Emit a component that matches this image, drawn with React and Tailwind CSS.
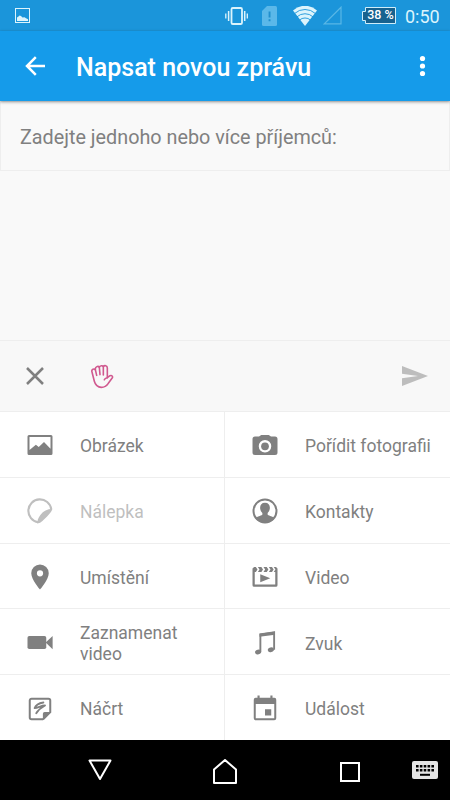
const font = { fontFamily: 'Roboto, "Noto Sans", sans-serif' };

function Icon({ children }) {
  return (
    <svg className="h-[30px] w-[30px] shrink-0" viewBox="0 0 24 24" fill="currentColor">
      {children}
    </svg>
  );
}

const items = [
  {
    label: "Obrázek",
    icon: <path fillRule="evenodd" d="M3.2 4h17.6a1.2 1.2 0 0 1 1.2 1.2v13.6a1.2 1.2 0 0 1-1.2 1.2H3.2A1.2 1.2 0 0 1 2 18.8V5.2A1.2 1.2 0 0 1 3.2 4zM3.6 5.6v10.400L8.700 11.800l2.300 1.800 4.200-4 5.200 5.400V5.600z" />,
  },
  {
    label: "Pořídit fotografii",
    icon: (
      <>
        <path fillRule="evenodd" d="M9 4h6l1.8 1.200H20a2 2 0 0 1 2 2V18a2 2 0 0 1-2 2H4a2 2 0 0 1-2-2V7.200a2 2 0 0 1 2-2h3.200L9 4zm3 4a5 5 0 1 0 0 10 5 5 0 0 0 0-10z" />
        <circle cx="12" cy="13" r="3.100" />
      </>
    ),
  },
  {
    label: "Nálepka",
    disabled: true,
    icon: (
      <>
        <path d="M21 10.600A9.200 9.200 0 1 0 10.500 21" fill="none" stroke="currentColor" strokeWidth="1.700" />
        <path d="M21.900 10.300c-.4 1.300-1.200 2.600-2.500 4.100-2.200 2.600-4.900 5.200-7.300 7l-2.200.5c-.2-2.100.6-4.500 2.400-6.800 2.400-3.100 5.500-4.600 9.600-4.800z" />
      </>
    ),
  },
  {
    label: "Kontakty",
    icon: (
      <>
        <circle cx="12" cy="12" r="9.200" fill="none" stroke="currentColor" strokeWidth="1.600" />
        <path d="M12 5.300c2.600 0 3.900 1.600 3.900 4 0 1.800-.8 3.400-1.800 4.300v1.200c.4 1 3.400 1.200 5.100 2.500l-.5 1.900A9.200 9.200 0 0 1 12 21.400a9.200 9.200 0 0 1-6.700-2.200l-.5-1.900c1.700-1.300 4.700-1.500 5.100-2.500v-1.200c-1-.9-1.800-2.500-1.800-4.300 0-2.400 1.300-4 3.900-4z" />
      </>
    ),
  },
  {
    label: "Umístění",
    icon: <path fillRule="evenodd" d="M12 2a7 7 0 0 0-7 7c0 5.200 7 13 7 13s7-7.800 7-13a7 7 0 0 0-7-7zm0 4.500a2.500 2.500 0 1 1 0 5 2.500 2.500 0 0 1 0-5z" />,
  },
  {
    label: "Video",
    icon: (
      <>
        <path d="M2 5.200 3.300 4h1.400l1.300 2-1.300 2h-.9v10h16.400V8h-1.200L20.300 6 19 4h1.800L22 5.200v13.300a1.300 1.300 0 0 1-1.300 1.300H3.300A1.300 1.300 0 0 1 2 18.500z" />
        <path d="M6.300 4h2.800l1.300 2-1.300 2H6.300l1.300-2zM10.800 4h2.600l1.300 2-1.300 2h-2.600l1.300-2zM15.100 4h2.500l1.300 2-1.300 2h-2.500l1.300-2zM8.200 9.800l8 3.200-8 3.200z" />
      </>
    ),
  },
  {
    label: "Zaznamenat video",
    icon: (
      <>
        <rect x="2" y="6.400" width="15" height="10.400" rx="1.400" />
        <path d="m16.500 11.600 5.600-5.300v10.600z" />
      </>
    ),
  },
  {
    label: "Zvuk",
    icon: (
      <>
        <ellipse cx="6.500" cy="19.200" rx="2.500" ry="1.800" transform="rotate(-15 6.500 19.200)" />
        <ellipse cx="16.700" cy="17.400" rx="2.500" ry="1.800" transform="rotate(-15 16.700 17.400)" />
        <path d="M8.300 19V5.100l11-1.700v13.900" fill="none" stroke="currentColor" strokeWidth="1.500" />
        <path d="m7.600 4.500 12.400-1.800v2.600L7.600 7z" />
      </>
    ),
  },
  {
    label: "Náčrt",
    icon: (
      <>
        <path d="M14.500 20.200H5.200a1.400 1.400 0 0 1-1.400-1.400V5.200a1.400 1.400 0 0 1 1.400-1.400h13.600a1.400 1.400 0 0 1 1.400 1.400v9.300l-5.700 5.700" fill="none" stroke="currentColor" strokeWidth="1.600" />
        <path d="M14.300 21v-5.300a1.400 1.400 0 0 1 1.400-1.400H21z" />
        <path d="M14.700 6.800C11.500 7.300 8.500 9 7.700 11.200c2.800 0 5-2 8.300-2-2.800 1.500-5.500 3.800-7 6.200" fill="none" stroke="currentColor" strokeWidth="1.500" strokeLinejoin="round" strokeLinecap="round" />
      </>
    ),
  },
  {
    label: "Událost",
    icon: (
      <>
        <path fillRule="evenodd" d="M6 1.200h1.700V3h8.600V1.200H18V3h1.500A1.600 1.600 0 0 1 21 4.600v14.800a1.600 1.600 0 0 1-1.600 1.600H4.600A1.600 1.600 0 0 1 3 19.400V4.600A1.600 1.600 0 0 1 4.600 3H6zM4.600 8v11.400h14.800V8z" />
        <path d="M12 12.200h5v5h-5z" />
      </>
    ),
  },
];

function StatusBar() {
  return (
    <div className="flex h-[31px] items-center bg-[#1b95da] pr-[10px] pl-[15px] text-[#dcf4fc]">
      <svg className="h-[15px] w-[15px]" viewBox="0 0 15 15">
        <rect x="0.500" y="0.500" width="14" height="14" fill="none" stroke="currentColor" />
        <path d="M2 13V9.500l1.500-1 1-1 1.500.6 1.500 1.500 2-.3 1.500 1 2 1V13z" fill="currentColor" />
      </svg>
      <svg className="ml-auto h-[18px] w-[23px]" viewBox="0 0 23 18" fill="none" stroke="currentColor">
        <rect x="6.500" y="1" width="10.500" height="16" rx="1.300" strokeWidth="1.800" />
        <path d="M3.600 4v10M19.700 4v10" strokeWidth="1.500" />
        <path d="M.8 6.500v5M22.300 6.500v5" strokeWidth="1.300" />
      </svg>
      <svg className="ml-[14px] h-[20px] w-[15px]" viewBox="0 0 15 20">
        <path d="M5 0h8.500A1.500 1.500 0 0 1 15 1.500v17a1.500 1.500 0 0 1-1.500 1.500h-12A1.500 1.500 0 0 1 0 18.500V5z" fill="#5bb8e9" />
        <path d="M6.600 5.500h1.900v6H6.600zM6.600 13.200h1.900v2.100H6.600z" fill="#218fce" />
      </svg>
      <svg className="ml-[16px] h-[20px] w-[24px]" viewBox="0 0 24 20">
        <path d="M0 4.500a17.600 17.600 0 0 1 24 0L12 20z" fill="currentColor" />
        <path d="M1.600 7.500a15.500 15.500 0 0 1 20.800 0M4 10.800a12 12 0 0 1 16 0M6.500 14a8.500 8.500 0 0 1 11 0" fill="none" stroke="#1b95da" strokeWidth="0.900" />
      </svg>
      <svg className="ml-[6px] h-[19px] w-[19px]" viewBox="0 0 19 19">
        <path d="M18 1.200V17.800H1.300z" fill="none" stroke="#59b7e6" strokeWidth="1.200" />
      </svg>
      <div className="relative ml-[20px] flex h-[17px] w-[34px] items-center justify-center">
        <svg className="absolute inset-0" width="34" height="17" viewBox="0 0 34 17">
          <path d="M3.500.5h30v16h-30v-3h-3v-9h3z" fill="#17628f" stroke="#cfeefa" />
        </svg>
        <span className="relative pl-[3px] text-[12.500px] leading-none font-medium whitespace-nowrap text-white">38 %</span>
      </div>
      <span className="ml-[9px] w-[35px] pt-[2px] text-[18px] leading-none whitespace-nowrap">0:50</span>
    </div>
  );
}

export default function App() {
  return (
    <div className="flex h-[800px] w-[450px] flex-col overflow-hidden bg-[#f9f9f9] text-[#808080]" style={font}>
      <StatusBar />
      <header className="z-10 flex h-[70px] items-center bg-[#159bea] pr-[18px] pl-[25px] text-white shadow-[0_1px_3px_rgba(0,0,0,0.4)]">
        <svg className="h-[20px] w-[20px]" viewBox="0 0 20 20" fill="none" stroke="currentColor" strokeWidth="2.500">
          <path d="M20 10H2M10.800 1.200 2 10l8.800 8.800" />
        </svg>
        <h1 className="ml-[31px] pt-[3px] text-[25px] leading-none font-medium whitespace-nowrap">Napsat novou zprávu</h1>
        <svg className="ml-auto h-[22px] w-[18px]" viewBox="0 0 18 22" fill="currentColor">
          <circle cx="8.500" cy="3.500" r="2.600" />
          <circle cx="8.500" cy="11" r="2.600" />
          <circle cx="8.500" cy="18.500" r="2.600" />
        </svg>
      </header>
      <div className="flex h-[70px] items-center border border-[#eeeeee] pt-[4px] pl-[19px] text-[19.800px] whitespace-nowrap">
        Zadejte jednoho nebo více příjemců:
      </div>
      <div className="flex-1" />
      <div className="flex h-[71px] items-center border-t border-[#eeeeee] bg-[#f8f8f8] pr-[22px] pl-[26px]">
        <svg className="h-[18px] w-[18px]" viewBox="0 0 18 18" fill="none" stroke="currentColor" strokeWidth="2.500">
          <path d="m1 1 16 16M17 1 1 17" />
        </svg>
        <svg className="ml-[46px] h-[25px] w-[24px]" viewBox="0 0 72 75" fill="none" stroke="#d0598f" strokeWidth="4.800" strokeLinecap="round" strokeLinejoin="round">
          <path d="M6 24C3 15 13 13 16 17C15 7 25 5 28 10C30 4 38 4 40 8C43 3 52 4 52 12L52 41L60 35C66 33 70 38 66 43L55 58C49 67 42 70 34 70C22 70 16 63 13 52Z" />
          <path d="M16 17L20 34M28 10L30 32M40 8V33M52 41C47 42 44 44 43 47" />
        </svg>
        <svg className="ml-auto h-[20px] w-[26px]" viewBox="0 0 26 20" fill="#bdbdbd">
          <path d="M0 0 26 10 0 20v-7.700L16 10 0 7.700z" />
        </svg>
      </div>
      <div className="grid h-[329px] grid-cols-2 grid-rows-5 bg-white">
        {items.map((item) => (
          <div
            key={item.label}
            className={
              "flex items-center border-t border-[#eeeeee] pt-[2px] pl-[25px] odd:border-r " +
              (item.disabled ? "text-[#bfbfbf]" : "")
            }
          >
            <Icon>{item.icon}</Icon>
            <span className="ml-[25px] w-[130px] pt-[2px] text-[17.500px] leading-[20.500px]">{item.label}</span>
          </div>
        ))}
      </div>
      <nav className="flex h-[60px] items-center bg-black pr-[12px] pl-[88px] text-white">
        <svg className="h-[22px] w-[24px]" viewBox="0 0 24 22" fill="none" stroke="currentColor" strokeWidth="2" strokeLinejoin="round">
          <path d="M1.500 1.500h21L12 20z" />
        </svg>
        <svg className="mt-[3px] ml-[101px] h-[26px] w-[24px]" viewBox="0 0 24 26" fill="none" stroke="currentColor" strokeWidth="2" strokeLinejoin="round">
          <path d="M1 24V10.500L12 1l11 9.500V24z" />
        </svg>
        <div className="mt-[3px] ml-[103px] h-[20px] w-[20px] border-2 border-white" />
        <svg className="ml-auto h-[18px] w-[26px]" viewBox="0 0 26 18">
          <rect width="26" height="18" rx="2" fill="#e4e4e4" />
          <path d="M4 5.300h18M4 9.300h18" stroke="#000" strokeWidth="2.500" strokeDasharray="2.600 1.250" />
          <path d="M8 13.800h10" stroke="#000" strokeWidth="2" />
        </svg>
      </nav>
    </div>
  );
}
